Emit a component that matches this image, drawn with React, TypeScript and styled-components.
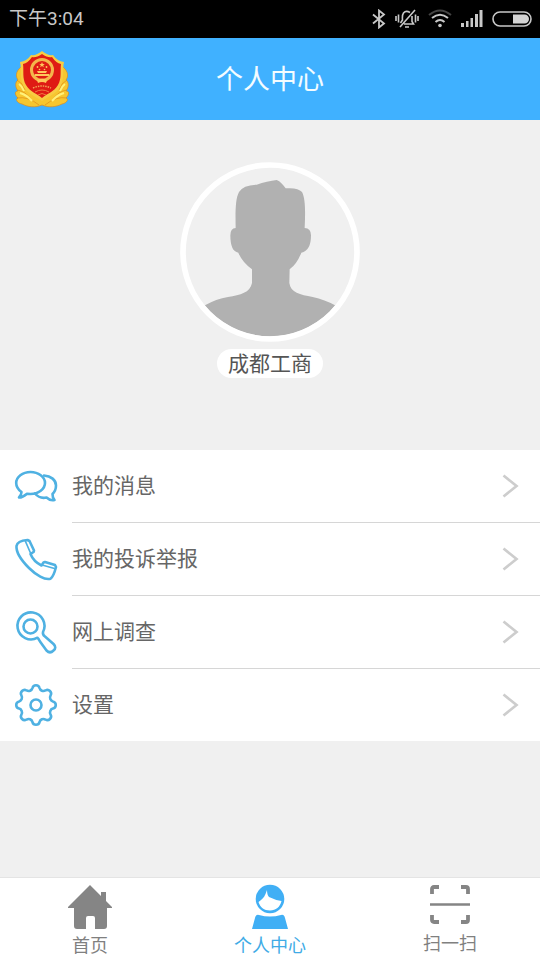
import React from "react";
import styled, { createGlobalStyle } from "styled-components";

const GlobalStyle = createGlobalStyle`
  *, *::before, *::after { box-sizing: border-box; }
  body {
    margin: 0;
    background: #f0f0f0;
    font-family: Roboto, "Noto Sans CJK SC", sans-serif;
  }
`;

const Page = styled.div`
  min-height: 100vh;
  display: flex;
  flex-direction: column;
`;

const StatusBar = styled.div`
  display: flex;
  align-items: center;
  justify-content: space-between;
  height: 38px;
  padding: 0 8px 0 9px;
  background: #000;
  color: #c8c8c8;
`;

const Clock = styled.time`
  font-size: 19px;
  line-height: 24px;
`;

const StatusIcons = styled.div`
  display: flex;
  align-items: center;
  gap: 9px;
  svg { display: block; }
`;

const Header = styled.header`
  display: grid;
  grid-template-columns: 56px 1fr 56px;
  align-items: center;
  height: 82px;
  padding: 0 14px;
  background: #40b1ff;
`;

const Title = styled.h1`
  margin: 0;
  padding-top: 2px;
  text-align: center;
  color: #f4fcff;
  font-size: 27px;
  line-height: 40px;
  font-weight: 400;
`;

const Profile = styled.section`
  display: flex;
  flex-direction: column;
  align-items: center;
  gap: 7px;
  padding: 42px 16px 72px;
`;

const Avatar = styled.svg`
  display: block;
  width: 180px;
  height: 180px;
`;

const NamePill = styled.div`
  padding: 2px 11px 0;
  border-radius: 15px;
  background: #fff;
  color: #555;
  font-size: 21px;
  line-height: 27px;
`;

const Menu = styled.nav`
  display: flex;
  flex-direction: column;
  background: #fff;
`;

const MenuLink = styled.a`
  display: grid;
  grid-template-columns: 42px 1fr;
  align-items: stretch;
  gap: 15px;
  padding-left: 15px;
  color: #666;
  font-size: 21px;
  line-height: 32px;
  text-decoration: none;
  > svg { align-self: center; }
`;

const RowBody = styled.span<{ $divided: boolean }>`
  display: flex;
  align-items: center;
  justify-content: space-between;
  height: ${(p) => (p.$divided ? "73px" : "72px")};
  padding-right: 21px;
  border-bottom: ${(p) => (p.$divided ? "1px solid #d6d6d6" : "none")};
`;

const TabBar = styled.nav`
  display: grid;
  grid-template-columns: repeat(3, 1fr);
  margin-top: auto;
  border-top: 1px solid #e4e4e4;
  background: #fff;
`;

const Tab = styled.button<{ $active?: boolean }>`
  display: flex;
  flex-direction: column;
  align-items: center;
  height: 82px;
  padding: 6px 0 0;
  gap: 4px;
  border: 0;
  background: none;
  color: ${(p) => (p.$active ? "#40abe6" : "#808080")};
  font-family: inherit;
  font-size: 18px;
  line-height: 24px;
  cursor: pointer;
`;

const lineProps = {
  fill: "none",
  stroke: "#4fb1e2",
  strokeWidth: 2.6,
  strokeLinejoin: "round" as const,
  strokeLinecap: "round" as const,
  overflow: "visible",
};

const MessageIcon = () => (
  <svg width="42" height="42" viewBox="0 0 42 42" {...lineProps}>
    <path d="M6.500 26C3 23.500 1.200 20 1.200 17C1.200 11 7.500 6 15.500 6S30 11 30 17S23.500 28 15.500 28L12 27.700C9.500 30 7 31.500 4 31.500C5.500 30 6.500 28 6.500 26Z" />
    <path d="M20 27.500C22.500 30.500 27 32.500 31.500 31.500C34 33.800 37 34.700 39.500 34C38 32 37.400 30 37.500 28C40 25.500 41 22.500 41 19.500C41 14 36 10 29 9.500" />
  </svg>
);

const PhoneIcon = () => (
  <svg width="42" height="42" viewBox="0 0 42 42" {...lineProps}>
    <path d="M1.500 7C2 4 6 1.500 12.500 1L14.500 2L19 11.500L18.500 13L15.500 15C17.500 20 21.500 24 26.500 26.500L28.500 23.500L30 23L40 26L41 28C39.500 34 38 38 35.500 39.700C30 41.500 21 36 14 29C6 21 1 13 1.500 7Z" />
    <path d="M10.500 2.500L15.500 14M28 26.300L39.500 29.500" strokeWidth="1.700" />
  </svg>
);

const SurveyIcon = () => (
  <svg width="42" height="42" viewBox="0 0 42 42" {...lineProps}>
    <path d="M22.500 25.700A13.500 13.500 0 1 1 28 20C27.600 22 28.500 23.500 30 24.500L38.500 32Q42 35.500 38.500 38.500Q35 42 31.500 38.500L25 29.500C24 27.500 23.500 26.500 22.500 25.700Z" />
    <circle cx="15.500" cy="14.500" r="7" />
  </svg>
);

const gearPoint = (degrees: number) => {
  const angle = (degrees * Math.PI) / 180;
  return `${(21 + 17.3 * Math.cos(angle)).toFixed(2)} ${(21 + 17.3 * Math.sin(angle)).toFixed(2)}`;
};

const gearPath =
  `M${gearPoint(-12)}` +
  Array.from({ length: 8 }, (_, i) =>
    `A3.7 3.7 0 0 1 ${gearPoint(i * 45 + 12)}A4 4 0 0 0 ${gearPoint(i * 45 + 33)}`
  ).join("") +
  "Z";

const GearIcon = () => (
  <svg width="42" height="42" viewBox="0 0 42 42" {...lineProps}>
    <path d={gearPath} />
    <circle cx="21" cy="21" r="5.500" />
  </svg>
);

const Chevron = () => (
  <svg width="17" height="24" viewBox="0 0 17 24" fill="none" stroke="#cdcdcd" strokeWidth="2.700">
    <path d="M1.500 1.500L14.500 12L1.500 22.500" />
  </svg>
);

const Emblem = () => (
  <svg width="56" height="60" viewBox="0 0 56 60" role="img" aria-label="徽标">
    <g fill="#f6c62f" stroke="#df8b18" strokeWidth="0.700">
      <path d="M7 18C1 23 2 28 4 31C1 33 1 38 4 42C1 42 0 45 4 49C1 50 3 54 8 55C14 58 21 59 28 56C35 59 42 58 48 55C53 54 55 50 52 49C56 45 55 42 52 42C55 38 55 33 52 31C54 28 55 23 49 18Z" />
      <path d="M3 31Q9 34 11 41M3 41Q11 42 17 50M3 49Q14 47 25 56M53 31Q47 34 45 41M53 41Q45 42 39 50M53 49Q42 47 31 56" fill="none" />
    </g>
    <path d="M5 35Q8 37 10 42M6 44Q13 46 18 52M51 35Q48 37 46 42M50 44Q43 46 38 52" fill="none" stroke="#fff17a" strokeWidth="2" />
    <path d="M28 2Q34 7 39 6Q43 12 50 13C48 21 51 29 46 38C42 45 35 47 28 52C21 47 14 45 10 38C5 29 8 21 6 13Q13 12 17 6Q22 7 28 2Z" fill="#f8cc43" />
    <path d="M28 5Q34 9 38 8Q42 14 47 15C46 22 48 29 44 36C40 43 34 44 28 49C22 44 16 43 12 36C8 29 10 22 9 15Q14 14 18 8Q22 9 28 5Z" fill="#df1b14" />
    <circle cx="28" cy="21" r="10.500" fill="none" stroke="#f4b64b" strokeWidth="3" />
    <path d="M28 13l.8 2h2l-1.600 1.300.6 2-1.800-1.200-1.800 1.200.6-2-1.600-1.300h2zM21 25h14v2H21zM23 22h10l-1 2h-8zM23 31q5-3 10 0l-1 3q-4-2-8 0z" fill="#ffc65b" />
    <path d="M19 39Q28 35 37 39" fill="none" stroke="#f3a555" strokeWidth="1.500" strokeDasharray="1.500 1" />
    <path d="M21 43Q28 39 35 43M24 46Q28 43 32 46" fill="none" stroke="#f07c40" />
    <g fill="#ffc65b"><circle cx="23.500" cy="18" r="0.900" /><circle cx="32.500" cy="18" r="0.900" /><circle cx="25.500" cy="20.500" r="0.800" /><circle cx="30.500" cy="20.500" r="0.800" /></g>
  </svg>
);

const Person = () => (
  <Avatar viewBox="30 37 540 540" role="img" aria-label="头像">
    <circle cx="300" cy="307" r="261" fill="#f0f0f0" />
    <clipPath id="portrait"><circle cx="300" cy="307" r="253" /></clipPath>
    <path
      clipPath="url(#portrait)"
      fill="#b1b1b1"
      d="M197 235C196 185 196 148 207 127Q220 106 260 105C280 97 302 94 320 91C331 95 338 104 347 116Q384 113 396 127C407 148 406 190 404 235Q423 236 423 257Q423 304 394 309Q381 343 359 359L358 400C362 429 390 435 428 442Q465 450 495 467L580 580H20L105 467Q138 448 174 442C212 436 240 429 246 400V359Q216 337 205 309Q181 306 181 257Q181 236 197 235Z"
    />
    <circle cx="300" cy="307" r="261" fill="none" stroke="#fff" strokeWidth="17" />
  </Avatar>
);

const HomeIcon = () => (
  <svg width="44" height="46" viewBox="0 0 44 46" fill="#858585">
    <path d="M22 1L33 12V8H38V17L44 23V24H39V42Q39 45 36 45H27V34Q27 32 25 32H20Q18 32 18 34V45H9Q6 45 6 42V24H0V23Z" />
  </svg>
);

const UserIcon = () => (
  <svg width="44" height="46" viewBox="0 0 44 46">
    <circle cx="22" cy="15" r="14.300" fill="#40aff5" />
    <path d="M10.500 18C13 16 16 14 17.500 10L19 6Q19 11 21 13Q27 16 33.500 17C32 23 28 26.500 22 26.500S12 23 10.500 18Z" fill="#fff" />
    <path d="M11 31Q22 34 33 31Q36 30 37 34L40 45H4L7 34Q8 30 11 31Z" fill="#40aff5" />
  </svg>
);

const ScanIcon = () => (
  <svg width="40" height="44" viewBox="0 0 40 44" fill="none" stroke="#858585">
    <path d="M2 10V5Q2 3 4 3H9M31 3H36Q38 3 38 5V10M38 31V36Q38 38 36 38H31M9 38H4Q2 38 2 36V31" strokeWidth="3.800" />
    <path d="M0 20.500H40" strokeWidth="2.500" />
  </svg>
);

const StatusGlyphs = () => (
  <StatusIcons>
    <svg width="14" height="20" viewBox="0 0 14 20" fill="none" stroke="#c8c8c8" strokeWidth="1.800">
      <path d="M1 5.500L12 14.500L7 18.500V1.500L12 5.500L1 14.500" />
    </svg>
    <svg width="24" height="20" viewBox="0 0 24 20" fill="none" stroke="#c8c8c8" strokeWidth="1.600">
      <path d="M1 7V12M3.500 5.500V13.500M23 7V12M20.500 5.500V13.500M9 15H18.500L17 12.500V7M15 3.500Q11 1 8.500 4Q7 6 7.500 11L5.500 14M20 1L5 18M10 18H14" />
    </svg>
    <svg width="24" height="20" viewBox="0 0 24 20" fill="none" stroke="#c8c8c8" strokeWidth="2">
      <path d="M1 6Q12-3 23 6" stroke="#444" />
      <path d="M4 9Q12 2.500 20 9M7.500 13Q12 9 16.500 13" />
      <circle cx="12" cy="16.500" r="1.800" fill="#c8c8c8" stroke="none" />
    </svg>
    <svg width="22" height="18" viewBox="0 0 22 18" fill="#c8c8c8">
      <path d="M0 13H3V17H0zM5 11H7.500V17H5zM9.500 8H12V17H9.500zM14 4H17V17H14zM18.500 0H21.500V17H18.500z" />
    </svg>
    <svg width="40" height="16" viewBox="0 0 40 16">
      <rect x="1" y="1" width="38" height="14" rx="7" fill="none" stroke="#c8c8c8" strokeWidth="1.600" />
      <path d="M21 3.500H32.500A4.500 4.500 0 0 1 32.500 12.500H21Z" fill="#d4d4d4" />
    </svg>
  </StatusIcons>
);

const menuItems = [
  { label: "我的消息", Icon: MessageIcon },
  { label: "我的投诉举报", Icon: PhoneIcon },
  { label: "网上调查", Icon: SurveyIcon },
  { label: "设置", Icon: GearIcon },
];

export default function App() {
  return (
    <Page>
      <GlobalStyle />
      <StatusBar>
        <Clock>下午3:04</Clock>
        <StatusGlyphs />
      </StatusBar>
      <Header>
        <Emblem />
        <Title>个人中心</Title>
      </Header>
      <Profile>
        <Person />
        <NamePill>成都工商</NamePill>
      </Profile>
      <Menu>
        {menuItems.map(({ label, Icon }, i) => (
          <MenuLink href="#" key={label}>
            <Icon />
            <RowBody $divided={i < menuItems.length - 1}>
              {label}
              <Chevron />
            </RowBody>
          </MenuLink>
        ))}
      </Menu>
      <TabBar>
        <Tab type="button"><HomeIcon />首页</Tab>
        <Tab type="button" $active aria-current="page"><UserIcon />个人中心</Tab>
        <Tab type="button"><ScanIcon />扫一扫</Tab>
      </TabBar>
    </Page>
  );
}
